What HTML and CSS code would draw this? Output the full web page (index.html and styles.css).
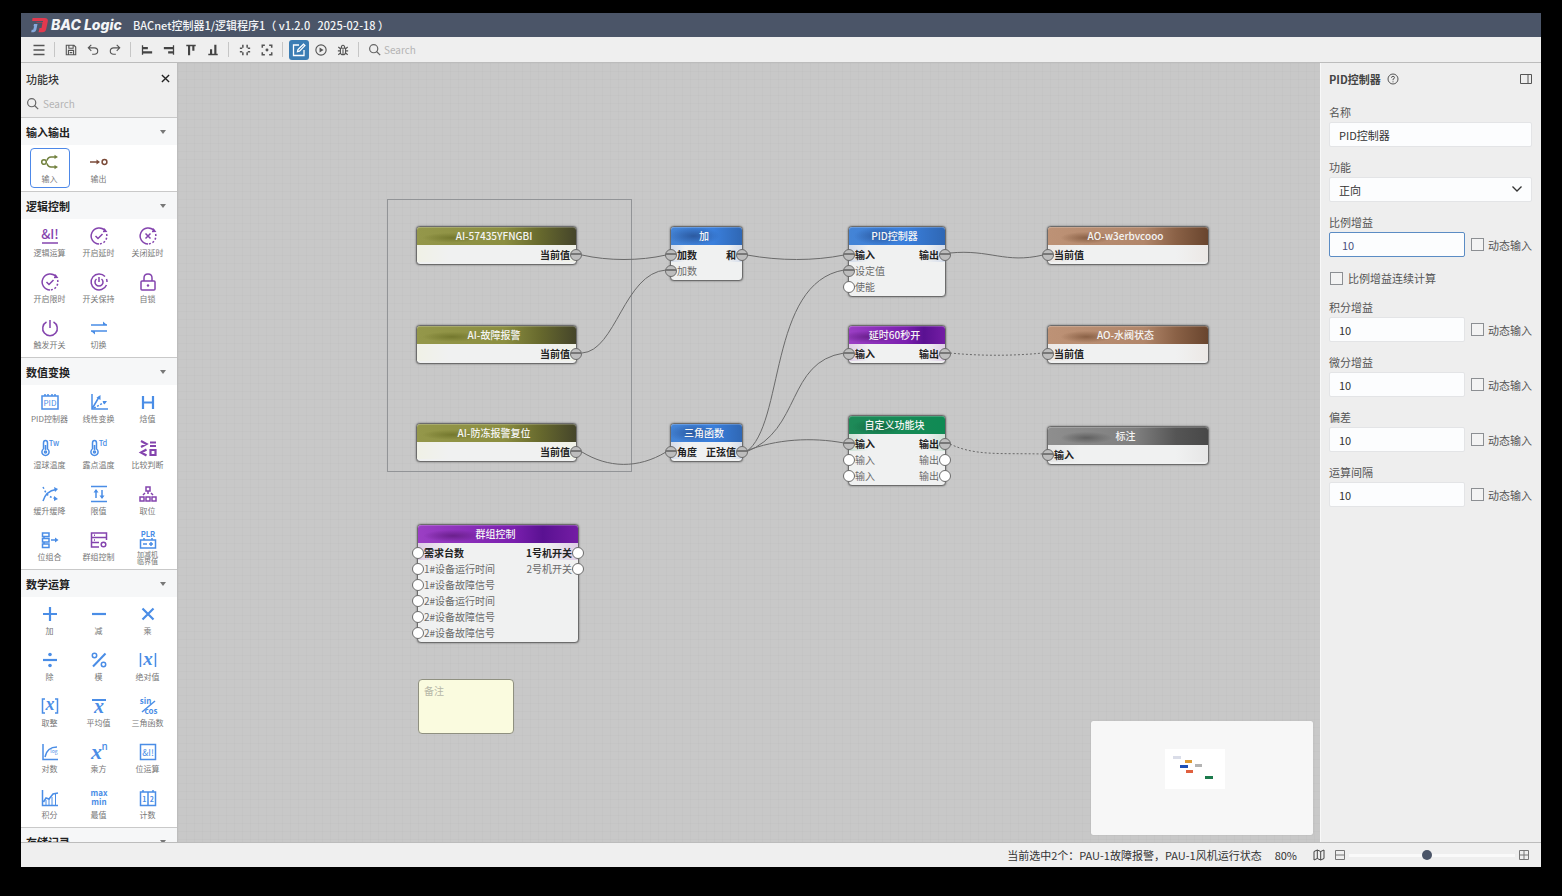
FILE: index.html
```html
<!DOCTYPE html>
<html lang="zh-CN">
<head>
<meta charset="utf-8">
<title>BAC Logic</title>
<link rel="stylesheet" href="styles.css">
</head>
<body>
<svg class="sprite" aria-hidden="true">
  <symbol id="search" viewBox="0 0 16 16"><circle cx="7" cy="7" r="5"/><path d="M10.500 10.500 15 15"/></symbol>
  <symbol id="delay" viewBox="0 0 18 18"><path d="M15.400 4A8 8 0 1 0 9 17"/><path d="M16.600 7A8 8 0 0 1 9 17" stroke-dasharray="2 1.800"/><path d="M14 1.600 16 4.400 13 4.600"/></symbol>
</svg>
<div class="app">
  <header class="titlebar">
    <svg class="logo" viewBox="0 0 18 16"><path d="M1.500 1H13.500Q17.500 1 16.800 4.500L15.200 12Q14.500 15.200 11.500 15.200H7.500L8.500 11H10.500L11.500 5.500H5.500L4.800 4H1.200Z" fill="#e2394e"/><path d="M3.500 4.500H12" stroke="#4b5568"/><path d="M3 7H6.500L5.300 12.800Q4.800 15.200 2.500 15.200H.200L.700 12.800H2.200L3.200 9.300H2.500Z" fill="#86a9dc"/></svg>
    <span class="brand">BAC Logic</span>
    <h1 class="doc">BACnet控制器1/逻辑程序1（ v1.2.0 &nbsp; 2025-02-18 ）</h1>
  </header>

  <nav class="toolbar" aria-label="工具栏">
    <button class="tool menu" aria-label="菜单"><svg viewBox="0 0 14 14"><path d="M1.500 2.500H12.500M1.500 7H12.500M1.500 11.500H12.500"/></svg></button>
    <span class="sep"></span>
    <button class="tool" aria-label="保存"><svg viewBox="0 0 14 14"><path d="M1.500 1.500H10.500L12.500 3.500V12.500H1.500ZM4.500 1.500V5H9.500V1.500M4 12.500V7.500H10V12.500M5.500 10H8.500"/></svg></button>
    <button class="tool" aria-label="撤销"><svg viewBox="0 0 14 14"><path d="M5 1 1.500 4.500 5 8M2 4.500H8.500Q12.500 4.500 12.500 8.200T8.500 12H6"/></svg></button>
    <button class="tool" aria-label="重做"><svg viewBox="0 0 14 14"><path d="M9 1 12.500 4.500 9 8M12 4.500H5.500Q1.500 4.500 1.500 8.200T5.500 12H8"/></svg></button>
    <span class="sep"></span>
    <button class="tool solid" aria-label="左对齐"><svg viewBox="0 0 14 14"><path d="M1 1.500H2.500V12.500H1ZM2.500 3.500H8V6H2.500ZM2.500 8.500H13V11H2.500Z"/></svg></button>
    <button class="tool solid" aria-label="右对齐"><svg viewBox="0 0 14 14"><path d="M11.500 1.500H13V12.500H11.500ZM1 3.500H11.500V6H1ZM6 8.500H11.500V11H6Z"/></svg></button>
    <button class="tool solid" aria-label="顶对齐"><svg viewBox="0 0 14 14"><path d="M1.500 1H12.500V2.500H1.500ZM3.500 2.500H6V13H3.500ZM8.500 2.500H11V8H8.500Z"/></svg></button>
    <button class="tool solid" aria-label="底对齐"><svg viewBox="0 0 14 14"><path d="M1.500 11.500H12.500V13H1.500ZM3.500 6H6V11.500H3.500ZM8.500 1H11V11.500H8.500Z"/></svg></button>
    <span class="sep"></span>
    <button class="tool heavy" aria-label="收缩"><svg viewBox="0 0 14 14"><path d="M4.500 1V4.500M1 5H3.800M9.500 1V4.500M13 5H10.200M4.500 13V9.500M1 9H3.800M9.500 13V9.500M13 9H10.200"/></svg></button>
    <button class="tool heavy" aria-label="居中"><svg viewBox="0 0 14 14"><path d="M1.500 4.500V1.500H4.500M9.500 1.500H12.500V4.500M12.500 9.500V12.500H9.500M4.500 12.500H1.500V9.500"/><circle cx="7" cy="7" r="1.700" class="fill"/></svg></button>
    <span class="sep"></span>
    <button class="tool active" aria-label="编辑"><svg viewBox="0 0 14 14"><path d="M7 2H1.500V12.500H12V7M5.500 8.700 6 6.500 11.500 1.200 12.900 2.600 7.500 8.200Z"/></svg></button>
    <button class="tool" aria-label="运行"><svg viewBox="0 0 14 14"><circle cx="7" cy="7" r="6"/><path d="M5.300 4V10L10 7Z" class="fill"/></svg></button>
    <button class="tool" aria-label="调试"><svg viewBox="0 0 14 14"><path d="M4 5H10V9.500Q10 12.500 7 12.500T4 9.500ZM7 6V12.500M5 5Q5 1.500 7 1.500T9 5M1 8H4M10 8H13M1.500 3.500 4 5.500M12.500 3.500 10 5.500M1.500 12.500 4 10.500M12.500 12.500 10 10.500"/></svg></button>
    <span class="sep"></span>
    <label class="search"><svg><use href="#search"/></svg><input type="text" placeholder="Search" aria-label="搜索"></label>
  </nav>

  <main class="main">
    <aside class="palette">
      <div class="palette-head"><h2>功能块</h2><button class="close" aria-label="关闭"><svg viewBox="0 0 10 10"><path d="M1 1 9 9M9 1 1 9"/></svg></button></div>
      <label class="search palette-search"><svg><use href="#search"/></svg><input type="text" placeholder="Search" aria-label="搜索功能块"></label>

      <section class="group">
        <button class="group-title">输入输出<i></i></button>
        <div class="items">
          <button class="item olive selected"><svg viewBox="0 0 18 18"><circle cx="3" cy="9" r="2.300"/><path d="M6 7.500Q7 4 10 4H15M6 10.500Q7 14 10 14H15"/><path d="M13.500 1.800 17 4 13.500 6ZM13.500 12 17 14 13.500 16.200Z" class="fill"/></svg>输入</button>
          <button class="item brown"><svg viewBox="0 0 18 18"><path d="M0 9H8"/><path d="M6.500 6.500 10 9 6.500 11.500Z" class="fill"/><circle cx="14.500" cy="9" r="2.400"/></svg>输出</button>
        </div>
      </section>

      <section class="group">
        <button class="group-title">逻辑控制<i></i></button>
        <div class="items">
          <button class="item purple"><svg viewBox="0 0 18 18"><text x="9" y="12" font-size="13" font-weight="500">&amp;I!</text><path d="M1 16H17"/></svg>逻辑运算</button>
          <button class="item purple"><svg viewBox="0 0 18 18"><use href="#delay"/><path d="M5.500 9 8 11.500 12.500 7"/></svg>开启延时</button>
          <button class="item purple"><svg viewBox="0 0 18 18"><use href="#delay"/><path d="M6.500 6.500 11.500 11.500M11.500 6.500 6.500 11.500"/></svg>关闭延时</button>
          <button class="item purple"><svg viewBox="0 0 18 18"><use href="#delay"/><path d="M5.500 9 8 11.500 12.500 7"/></svg>开启限时</button>
          <button class="item purple"><svg viewBox="0 0 18 18"><path d="M15 3.500A8 8 0 1 0 16.500 12M6.500 6A4 4 0 1 0 11.500 6M9 4V9M16.500 6A8 8 0 0 1 17 9"/></svg>开关保持</button>
          <button class="item purple"><svg viewBox="0 0 18 18"><rect x="2" y="8" width="14" height="9" rx="1"/><path d="M5 8V5Q5 1 9 1T13 5V8"/><circle cx="9" cy="12.500" r="1.200" class="fill"/></svg>自锁</button>
          <button class="item purple"><svg viewBox="0 0 18 18"><path d="M5.500 3A7.300 7.300 0 1 0 12.500 3M9 1V9"/></svg>触发开关</button>
          <button class="item blue"><svg viewBox="0 0 18 18"><path d="M1 6H17M17 12H1"/><path d="M13 2.500 17 6H13ZM5 15.500 1 12H5Z" class="fill"/></svg>切换</button>
        </div>
      </section>

      <section class="group">
        <button class="group-title">数值变换<i></i></button>
        <div class="items">
          <button class="item blue"><svg viewBox="0 0 18 18"><rect x="1" y="3" width="16" height="13"/><path d="M4 1V3M7 1V3M11 1V3M14 1V3"/><text x="9" y="12.500" font-size="8">PID</text></svg>PID控制器</button>
          <button class="item blue"><svg viewBox="0 0 18 18"><path d="M2 1V16H18M2 16 9 4"/><path d="M10.500 2 10.500 7 6.500 4.800ZM17 8 12.500 8 14.500 11.500Z" class="fill"/><path d="M4 15 15 9" stroke-dasharray="2 1.500"/></svg>线性变换</button>
          <button class="item blue"><svg viewBox="0 0 18 18" class="bold"><path d="M4 3V16M14 3V16M4 9.500H14"/></svg>焓值</button>
          <button class="item blue"><svg viewBox="0 0 18 18"><path d="M2.500 10V4Q2.500 1.500 4.500 1.500T6.500 4V10A3.600 3.600 0 1 1 2.500 10M4.500 6V11"/><circle cx="4.500" cy="13" r="1"/><text x="13" y="7" font-size="7.500" font-weight="500">Tw</text></svg>湿球温度</button>
          <button class="item blue"><svg viewBox="0 0 18 18"><path d="M2.500 10V4Q2.500 1.500 4.500 1.500T6.500 4V10A3.600 3.600 0 1 1 2.500 10M4.500 6V11"/><circle cx="4.500" cy="13" r="1"/><text x="13" y="7" font-size="7.500" font-weight="500">Td</text></svg>露点温度</button>
          <button class="item purple"><svg viewBox="0 0 18 18" class="bold"><path d="M2 2 7.500 5 2 8M11 3.500H17M11 7H17M7.500 10.500 2 13.500 7.500 16.500M11.500 11H16.500V16H11.500Z"/></svg>比较判断</button>
          <button class="item blue"><svg viewBox="0 0 18 18"><path d="M2 16Q5 6 15 4.500"/><path d="M13 2 17 4 14 7ZM13 11 17 14 13 16Z" class="fill"/><path d="M2 2 5 8Q8 12 14 13.500" stroke-dasharray="2 2"/></svg>缓升缓降</button>
          <button class="item blue"><svg viewBox="0 0 18 18"><path d="M1 1.500H17M1 16.500H17M6 5V13M12 5V13"/><path d="M3.500 7.500 6 4 8.500 7.500ZM9.500 10.500 12 14 14.500 10.500Z" class="fill"/></svg>限值</button>
          <button class="item purple"><svg viewBox="0 0 18 18"><rect x="7" y="2" width="4" height="4"/><rect x="1" y="12" width="4" height="4"/><rect x="7" y="12" width="4" height="4"/><rect x="13" y="12" width="4" height="4"/><path d="M9 6V9M4 10 6 8M14 10 12 8"/></svg>取位</button>
          <button class="item blue"><svg viewBox="0 0 18 18"><path d="M1.500 2H8V5.500H1.500ZM1.500 7.500H8V11H1.500ZM1.500 13H8V16.500H1.500ZM3 5.500V7.500M3 11V13M10 9H15"/><path d="M14 6.500 17.500 9 14 11.500Z" class="fill"/></svg>位组合</button>
          <button class="item purple"><svg viewBox="0 0 18 18"><path d="M16.500 9V2H1.500V16H9M1.500 6.500H16.500M1.500 11.500H9M4 4.300H5M4 9H5"/><circle cx="13.500" cy="13.500" r="2.300"/></svg>群组控制</button>
          <button class="item blue two-line"><svg viewBox="0 0 18 18"><text x="9" y="6" font-size="7.500" font-weight="700">PLR</text><rect x="1.500" y="9" width="15" height="8"/><path d="M5 7V9M13 7V9M4 13H8M10 13H14M12 11V15"/></svg>加减机<br>临界值</button>
        </div>
      </section>

      <section class="group">
        <button class="group-title">数学运算<i></i></button>
        <div class="items">
          <button class="item blue"><svg viewBox="0 0 18 18" class="bold"><path d="M2 9H16M9 2V16"/></svg>加</button>
          <button class="item blue"><svg viewBox="0 0 18 18" class="bold"><path d="M2 9H16"/></svg>减</button>
          <button class="item blue"><svg viewBox="0 0 18 18" class="bold"><path d="M3.500 3.500 14.500 14.500M14.500 3.500 3.500 14.500"/></svg>乘</button>
          <button class="item blue"><svg viewBox="0 0 18 18" class="bold"><path d="M2 9H16"/><circle cx="9" cy="3.500" r="1.800" class="fill"/><circle cx="9" cy="14.500" r="1.800" class="fill"/></svg>除</button>
          <button class="item blue"><svg viewBox="0 0 18 18"><circle cx="4.500" cy="4.500" r="2.200"/><circle cx="13.500" cy="13.500" r="2.200"/><path d="M15.500 2.500 3 15.500" stroke-width="2"/></svg>模</button>
          <button class="item blue"><svg viewBox="0 0 18 18"><path d="M1.500 2V16M16.500 2V16"/><text class="math" x="9" y="13.500" font-size="19">x</text></svg>绝对值</button>
          <button class="item blue"><svg viewBox="0 0 18 18"><path d="M4 2H1.500V16H4M14 2H16.500V16H14"/><text class="math" x="9" y="13" font-size="18">x</text></svg>取整</button>
          <button class="item blue"><svg viewBox="0 0 18 18"><path d="M2 3H16" stroke-width="2"/><text class="math" x="9" y="16" font-size="20">x</text></svg>平均值</button>
          <button class="item blue"><svg viewBox="0 0 18 18"><text x="6.500" y="7" font-size="8" font-weight="700">sin</text><text x="12" y="17" font-size="8" font-weight="700">cos</text><path d="M16 4 3 15"/></svg>三角函数</button>
          <button class="item blue"><svg viewBox="0 0 18 18"><path d="M2 1V16.500H17M4 14Q6 4 16 4"/><text x="13" y="10" font-size="5">log</text></svg>对数</button>
          <button class="item blue"><svg viewBox="0 0 18 18"><text class="math" x="6.500" y="15.500" font-size="22">x</text><text x="14.500" y="7" font-size="10" font-weight="500">n</text></svg>乘方</button>
          <button class="item blue"><svg viewBox="0 0 18 18"><rect x="1.500" y="1.500" width="15" height="15"/><text x="9" y="12.500" font-size="9">&amp;I!</text></svg>位运算</button>
          <button class="item blue"><svg viewBox="0 0 18 18"><path d="M1.500 1V16.500H17M2.500 13 5 9 8 10 12 5 17 4"/><path d="M5 11V16M8 9V16M11 8V16M14.500 5V16" stroke-width="1"/></svg>积分</button>
          <button class="item blue"><svg viewBox="0 0 18 18"><text x="9" y="7" font-size="8" font-weight="700">max</text><text x="9" y="16" font-size="8" font-weight="700">min</text></svg>最值</button>
          <button class="item blue"><svg viewBox="0 0 18 18"><path d="M1.500 3H16.500V16.500H1.500ZM9 3V16.500M4 1V3M14 1V3"/><text x="5.300" y="12.500" font-size="7" font-weight="700">1</text><text x="12.800" y="12.500" font-size="7" font-weight="700">2</text></svg>计数</button>
        </div>
      </section>

      <section class="group">
        <button class="group-title">存储记录<i></i></button>
      </section>
    </aside>

    <section class="canvas" aria-label="画布">
      <div class="marquee"></div>
      <svg class="wires">
        <g transform="translate(-178 -63)">
          <path d="M582 255C608 261 640 261 666 255"/>
          <path d="M582 353C616 351 624 273 666 270"/>
          <path d="M582 452C608 468 638 469 666 452"/>
          <path d="M747 255C780 261 814 261 844 255"/>
          <path d="M746 452C785 425 768 283 844 270"/>
          <path d="M746 452C802 430 786 362 844 353"/>
          <path d="M746 451C776 439 812 437 844 443"/>
          <path d="M950 253C990 249 1005 264 1043 255"/>
          <path class="dash" d="M950 353C980 356 1012 356 1043 353"/>
          <path class="dash" d="M950 444C975 456 1000 453 1043 454"/>
        </g>
      </svg>

      <article class="node n-ai1 c-olive"><h3>AI-57435YFNGBI</h3><div class="ports"><ul></ul><ul><li class="on">当前值</li></ul></div></article>
      <article class="node n-ai2 c-olive"><h3>AI-故障报警</h3><div class="ports"><ul></ul><ul><li class="on">当前值</li></ul></div></article>
      <article class="node n-ai3 c-olive"><h3>AI-防冻报警复位</h3><div class="ports"><ul></ul><ul><li class="on">当前值</li></ul></div></article>
      <article class="node n-add c-blue"><h3>加</h3><div class="ports"><ul><li class="on">加数</li><li class="on">加数</li></ul><ul><li class="on">和</li></ul></div></article>
      <article class="node n-trig c-blue"><h3>三角函数</h3><div class="ports"><ul><li class="on">角度</li></ul><ul><li class="on">正弦值</li></ul></div></article>
      <article class="node n-pid c-blue"><h3>PID控制器</h3><div class="ports"><ul><li class="on">输入</li><li class="on">设定值</li><li>使能</li></ul><ul><li class="on">输出</li></ul></div></article>
      <article class="node n-delay c-purple"><h3>延时60秒开</h3><div class="ports"><ul><li class="on">输入</li></ul><ul><li class="on">输出</li></ul></div></article>
      <article class="node n-custom c-green"><h3>自定义功能块</h3><div class="ports"><ul><li class="on">输入</li><li>输入</li><li>输入</li></ul><ul><li class="on">输出</li><li>输出</li><li>输出</li></ul></div></article>
      <article class="node n-ao1 c-copper"><h3>AO-w3erbvcooo</h3><div class="ports"><ul><li class="on">当前值</li></ul><ul></ul></div></article>
      <article class="node n-ao2 c-copper"><h3>AO-水阀状态</h3><div class="ports"><ul><li class="on">当前值</li></ul><ul></ul></div></article>
      <article class="node n-mark c-gray"><h3>标注</h3><div class="ports"><ul><li class="on">输入</li></ul><ul></ul></div></article>
      <article class="node n-group c-purple"><h3>群组控制</h3><div class="ports"><ul><li>需求台数</li><li>1#设备运行时间</li><li>1#设备故障信号</li><li>2#设备运行时间</li><li>2#设备故障信号</li><li>2#设备故障信号</li></ul><ul><li>1号机开关</li><li>2号机开关</li></ul></div></article>
      <textarea class="note" placeholder="备注" aria-label="备注"></textarea>

      <div class="minimap">
        <svg viewBox="0 0 60 40"><rect x="8" y="7" width="8" height="3" fill="#dadde8"/><rect x="20" y="11" width="7" height="3" fill="#dc9a35"/><rect x="15" y="16" width="8" height="3" fill="#1c50b8"/><rect x="30" y="15" width="7" height="3" fill="#b4b4b4"/><rect x="21" y="21" width="7" height="3" fill="#e0603f"/><rect x="40" y="27" width="8" height="3" fill="#1c7a4c"/></svg>
      </div>
    </section>

    <aside class="props">
      <div class="props-head"><h2>PID控制器</h2><button class="help" aria-label="帮助"><svg viewBox="0 0 12 12"><circle cx="6" cy="6" r="5"/><path d="M4.500 4.800Q4.500 3.300 6 3.300T7.500 4.700Q7.500 5.600 6 6.200V7.200M6 8.300V9.300"/></svg></button><button class="dock" aria-label="停靠"><svg viewBox="0 0 12 12"><path d="M.500 1.500H11.500V10.500H.500ZM8 1.500V10.500"/></svg></button></div>
      <form class="form">
        <div class="field"><label for="name">名称</label><input id="name" type="text" value="PID控制器"></div>
        <div class="field"><label for="func">功能</label><div class="select"><select id="func"><option>正向</option></select><svg viewBox="0 0 12 12"><path d="M1.500 3.500 6 8 10.500 3.500"/></svg></div></div>
        <div class="field"><label for="kp">比例增益</label><div class="line"><input id="kp" class="focused" type="text" value="10"><label class="check"><input type="checkbox">动态输入</label></div></div>
        <label class="check solo"><input type="checkbox">比例增益连续计算</label>
        <div class="field"><label for="ki">积分增益</label><div class="line"><input id="ki" type="text" value="10"><label class="check"><input type="checkbox">动态输入</label></div></div>
        <div class="field"><label for="kd">微分增益</label><div class="line"><input id="kd" type="text" value="10"><label class="check"><input type="checkbox">动态输入</label></div></div>
        <div class="field"><label for="bias">偏差</label><div class="line"><input id="bias" type="text" value="10"><label class="check"><input type="checkbox">动态输入</label></div></div>
        <div class="field"><label for="period">运算间隔</label><div class="line"><input id="period" type="text" value="10"><label class="check"><input type="checkbox">动态输入</label></div></div>
      </form>
    </aside>
  </main>

  <footer class="status">
    <span>当前选中2个：PAU-1故障报警，PAU-1风机运行状态</span>
    <span class="percent">80%</span>
    <button class="map" aria-label="小地图"><svg viewBox="0 0 12 12"><path d="M1 2.500 4.300 1 7.700 2.500 11 1V9.500L7.700 11 4.300 9.500 1 11ZM4.300 1V9.500M7.700 2.500V11"/></svg></button>
    <button aria-label="缩小"><svg viewBox="0 0 12 12"><path d="M1.500 1.500H10.500V10.500H1.500ZM1.500 6H10.500"/></svg></button>
    <input class="zoom" type="range" min="0" max="100" value="47" aria-label="缩放">
    <button aria-label="放大"><svg viewBox="0 0 12 12"><path d="M1.500 1.500H10.500V10.500H1.500ZM1.500 6H10.500M6 1.500V10.500"/></svg></button>
  </footer>
</div>
</body>
</html>
```
FILE: styles.css
```css
* { box-sizing: border-box; }

body {
  margin: 0;
  height: 100vh;
  padding: 13px 21px 29px;
  background: #000;
  color: #333;
  font: 11px/16px "Noto Sans CJK SC", sans-serif;
}

h1, h2, h3, ul { margin: 0; padding: 0; font: inherit; list-style: none; }
button, input, select, textarea { margin: 0; padding: 0; border: 0; background: none; color: inherit; font: inherit; outline: 0; }
svg { display: block; fill: none; stroke: currentColor; }
.sprite { position: absolute; width: 0; height: 0; }

.app { display: flex; flex-direction: column; height: 100%; background: #efefef; overflow: hidden; }

/* title bar */
.titlebar { display: flex; align-items: center; height: 24px; padding-left: 10px; background: #4b5568; color: #f4f5f7; flex: none; }
.logo { width: 18px; height: 16px; stroke: none; }
.brand { width: 84px; padding-left: 2px; font: italic 800 14px/16px Inter, sans-serif; white-space: nowrap; }
.doc { font-weight: 500; white-space: nowrap; }

/* toolbar */
.toolbar { display: flex; align-items: center; gap: 2px; height: 26px; padding-left: 8px; border-bottom: 1px solid #bcbcbc; flex: none; }
.tool { display: grid; place-items: center; width: 20px; height: 20px; border-radius: 3px; color: #555; }
.tool svg { width: 12px; height: 12px; stroke-width: 1.3; }
.tool.menu svg { width: 14px; height: 14px; }
.tool.heavy svg { stroke-width: 1.8; }
.tool.solid svg { fill: #444; stroke: none; }
.tool.active { background: #3b7db4; color: #fff; }
.tool.active svg { width: 14px; height: 14px; }
.sep { width: 1px; height: 15px; margin: 0 4px 0 3px; background: #c6c6c6; }
.search { display: flex; align-items: center; gap: 3px; padding-left: 3px; color: #666; }
.search svg { width: 13px; height: 13px; flex: none; stroke-width: 1.5; }
.search input { width: 80px; height: 18px; font-size: 10px; }
.search input::placeholder { color: #b4b4b4; opacity: 1; }

.main { display: flex; flex: 1; min-height: 0; }

/* block palette */
.palette { width: 157px; flex: none; overflow: hidden; background: #efefef; border-right: 1px solid #bdbdbd; }
.palette-head { display: flex; align-items: center; justify-content: space-between; height: 31px; padding: 0 7px 0 5px; }
.palette-head h2 { font-weight: 500; }
.close { color: #222; }
.close svg { width: 9px; height: 9px; stroke-width: 1.5; }
.palette-search { height: 24px; padding: 0 0 4px 5px; gap: 4px; border-bottom: 1px solid #c9c9c9; }
.group { background: #fff; border-bottom: 1px solid #c9c9c9; }
.group-title { display: flex; align-items: center; justify-content: space-between; width: 100%; height: 27px; padding: 0 11px 0 5px; background: #f6f7f8; color: #222; font-weight: 700; text-align: left; }
.group-title i { border: 3px solid transparent; border-top: 4px solid #777; border-bottom: 0; }
.items { display: grid; grid-template-columns: repeat(3, 49px); grid-auto-rows: 46px; place-items: center; padding-left: 4px; }
.item { display: flex; flex-direction: column; align-items: center; gap: 2px; width: 40px; height: 40px; padding-top: 4px; border: 1px solid transparent; border-radius: 4px; color: #777; font-size: 8px; line-height: 12px; white-space: nowrap; }
.item svg { width: 18px; height: 18px; flex: none; stroke-width: 1.5; overflow: visible; }
.item svg.bold { stroke-width: 2.2; }
.item.selected { border-color: #4d88e8; }
.item text { stroke: none; fill: currentColor; text-anchor: middle; }
.item .math { font-family: "Liberation Serif", serif; font-style: italic; font-weight: 700; }
.fill { fill: currentColor; stroke: none; }
.olive svg { color: #71803d; }
.brown svg { color: #7a4a38; }
.purple svg { color: #8444ae; }
.blue svg { color: #4a8de6; }
.two-line { font-size: 7px; line-height: 7px; }

/* canvas */
.canvas {
  position: relative;
  flex: 1;
  min-width: 0;
  overflow: hidden;
  background-color: #c8c8c8;
  background-image:
    linear-gradient(90deg, rgba(0, 0, 0, .016) 1px, transparent 1px),
    linear-gradient(rgba(0, 0, 0, .016) 1px, transparent 1px);
  background-size: 8px 8px;
}
.wires { position: absolute; inset: 0; width: 100%; height: 100%; stroke: #6a6a6a; stroke-width: 1; }
.dash { stroke-dasharray: 2 2; }
.marquee { position: absolute; left: 209px; top: 136px; width: 245px; height: 273px; border: 1px solid #929497; }

.node { position: absolute; border: 1px solid #6c6c6c; border-radius: 4px; background: #f0f1f1; box-shadow: 0 0 2px rgba(0, 0, 0, .5); font-size: 10px; line-height: 16px; color: #6a6a6a; }
.node h3 { height: 18px; padding-right: 5px; border-radius: 3px 3px 0 0; color: #f5f5f5; font-weight: 500; text-align: center; line-height: 18px; white-space: nowrap; box-shadow: inset 0 1px 0 rgba(255, 255, 255, .2); }
.ports { display: flex; justify-content: space-between; padding: 2px 6px 1px; border-radius: 0 0 3px 3px; white-space: nowrap; background: linear-gradient(90deg, var(--tint), transparent 20%, transparent 80%, var(--tint)) 0 0 / 100% 17px no-repeat; }
.ports li { position: relative; }
.ports li:first-child { color: #222; font-weight: 700; }
.ports li::before { content: ""; position: absolute; top: 2px; left: -12px; width: 10px; height: 10px; border: 1px solid #6c6c6c; border-radius: 50%; background: #fff; }
.ports ul:last-child { text-align: right; }
.ports ul:last-child li::before { left: auto; right: -12px; }
.ports li.on::before { background: linear-gradient(#bdbdbd 3px, #777 3px, #777 5px, #bdbdbd 5px); }

.c-olive { --tint: #f0f1e6; }
.c-blue { --tint: #d3dbea; }
.c-purple { --tint: #decde6; }
.c-green { --tint: #cde2d6; }
.c-copper { --tint: #ece8e5; }
.c-gray { --tint: #e6e6e6; }
.c-olive h3 { background: radial-gradient(ellipse 30px 5px at 22% 60%, #74782e, transparent), linear-gradient(90deg, #94974a, #8b8e40 55%, #66682d 78%, #45452a); }
.c-blue h3 { background: radial-gradient(ellipse 26px 9px at 32% 50%, #2c5aa0, transparent), linear-gradient(90deg, #4484d6, #3a7fdc 60%, #2f67b4); }
.c-purple h3 { background: radial-gradient(ellipse 30px 6px at 22% 60%, #6a208c, transparent), linear-gradient(90deg, #9b3fc4, #7a1fae 60%, #5a1192 78%, #741da4); }
.c-green h3 { background: radial-gradient(ellipse 26px 8px at 30% 60%, #166a44, transparent), linear-gradient(90deg, #1e8a58, #0f8a54); }
.c-copper h3 { background: radial-gradient(ellipse 26px 6px at 24% 60%, #8a6146, transparent), linear-gradient(90deg, #bd9276, #b1866a 60%, #8a6146 80%, #69452e); }
.c-gray h3 { background: radial-gradient(ellipse 26px 6px at 24% 60%, #606060, transparent), linear-gradient(90deg, #8e8e8e, #7f7f7f 55%, #555 80%, #484848); }

.n-ai1, .n-add, .n-pid, .n-ao1 { top: 163px; }
.n-ai2, .n-delay, .n-ao2 { top: 262px; }
.n-ai3, .n-trig { top: 360px; }
.n-custom { top: 352px; }
.n-mark { top: 363px; }
.n-group { top: 461px; left: 239px; width: 162px; }
.n-ai1, .n-ai2, .n-ai3 { left: 238px; width: 161px; }
.n-add, .n-trig { left: 492px; width: 73px; }
.n-pid, .n-delay, .n-custom { left: 670px; width: 98px; }
.n-ao1, .n-ao2, .n-mark { left: 869px; width: 162px; }

.note { position: absolute; left: 240px; top: 616px; width: 96px; height: 55px; padding: 3px 5px; border: 1px solid #8f9080; border-radius: 4px; background: #fafbdf; font-size: 10px; line-height: 16px; resize: none; }
.note::placeholder { color: #b6b7a8; opacity: 1; }

.minimap { position: absolute; right: 7px; bottom: 7px; display: grid; place-items: center; width: 222px; height: 114px; padding: 0 14px 19px 0; border-radius: 2px; background: #f7f7f7; box-shadow: 0 0 1px #999; }
.minimap svg { width: 60px; height: 40px; background: #fff; stroke: none; }

/* properties */
.props { width: 221px; flex: none; padding: 0 9px 0 8px; border-left: 1px solid #f8f8f8; background: #eee; color: #555; }
.props-head { display: flex; align-items: center; height: 31px; gap: 6px; }
.props-head h2 { font-weight: 700; color: #444; }
.props-head svg { width: 12px; height: 12px; }
.dock { margin-left: auto; }
.form { display: flex; flex-direction: column; gap: 10px; padding-top: 8px; }
.field { display: flex; flex-direction: column; }
.field > label { height: 20px; line-height: 20px; }
.field input[type="text"], .select select { width: 100%; height: 25px; padding: 0 9px; border: 1px solid #e3e4e6; border-radius: 2px; background: #fcfdfe; color: #333; }
.field input.focused { padding: 0 12px; border-color: #5b8cc4; color: #4a5080; }
.line { display: flex; align-items: center; gap: 6px; }
.line input[type="text"] { flex: 1; min-width: 0; }
.select { position: relative; }
.select select { appearance: none; }
.select svg { position: absolute; right: 9px; top: 6px; width: 12px; height: 12px; color: #333; stroke-width: 1.3; pointer-events: none; }
.check { display: flex; align-items: center; gap: 4px; white-space: nowrap; }
.check input { appearance: none; width: 13px; height: 13px; border: 1px solid #8c8f93; background: #f3f3f3; }
.solo { height: 20px; padding: 2px 0 0 1px; gap: 5px; }

/* status bar */
.status { display: flex; align-items: center; justify-content: flex-end; height: 25px; padding-right: 11px; border-top: 1px solid #bcbcbc; color: #333; flex: none; }
.status button { color: #777; }
.status svg { width: 12px; height: 12px; }
.percent { margin: 0 16px 0 13px; }
.status .map { margin-right: 9px; color: #444; }
.zoom { appearance: none; width: 166px; height: 12px; margin: 0 3px; background: linear-gradient(#fafafa, #fafafa) center / 100% 3px no-repeat; }
.zoom::-webkit-slider-thumb { appearance: none; width: 10px; height: 10px; border-radius: 50%; background: #4b5568; }
```
